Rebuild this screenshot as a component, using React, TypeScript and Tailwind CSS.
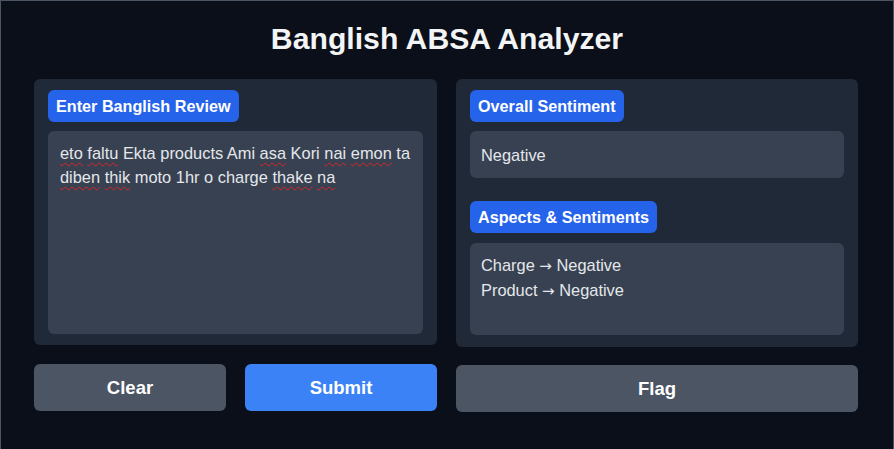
import React from "react";

const review: { w: string; bad?: boolean }[] = [
  { w: "eto", bad: true },
  { w: "faltu", bad: true },
  { w: "Ekta" },
  { w: "products" },
  { w: "Ami" },
  { w: "asa", bad: true },
  { w: "Kori" },
  { w: "nai", bad: true },
  { w: "emon", bad: true },
  { w: "ta" },
  { w: "diben", bad: true },
  { w: "thik", bad: true },
  { w: "moto" },
  { w: "1hr" },
  { w: "o" },
  { w: "charge" },
  { w: "thake", bad: true },
  { w: "na", bad: true },
];

const aspects = [
  { name: "Charge", label: "Negative" },
  { name: "Product", label: "Negative" },
];

function Label({ children }: { children: React.ReactNode }) {
  return (
    <span className="inline-block rounded-md bg-[#2563eb] px-2 py-1 text-[16.2px] font-bold leading-6 text-white">
      {children}
    </span>
  );
}

export default function App() {
  return (
    <div
      className="min-h-[449px] border border-b-0 border-[#4b5563] bg-[#0b0f19] text-[#e5e7eb]"
      style={{ fontFamily: '"Liberation Sans", Arial, sans-serif' }}
    >
      <h1 className="pt-[20px] text-center text-[30.2px] font-bold leading-9 text-[#f3f4f6]">
        Banglish ABSA Analyzer
      </h1>

      <div className="mt-[22px] flex gap-[19px] pl-[33px] pr-[35px]">
        <div className="flex w-[403px] flex-col gap-[19px]">
          <div className="rounded-md bg-[#1f2937] px-[14px] py-[11px]">
            <Label>Enter Banglish Review</Label>
            <div className="mt-[9px] h-[203px] rounded-md bg-[#374151] px-3 py-[10px] text-[16.4px] leading-6">
              {review.map((r, i) => (
                <React.Fragment key={i}>
                  <span
                    className={
                      r.bad
                        ? "underline decoration-[#dc2626] decoration-wavy decoration-1 underline-offset-[3px]"
                        : ""
                    }
                  >
                    {r.w}
                  </span>
                  {i < review.length - 1 ? " " : ""}
                </React.Fragment>
              ))}
            </div>
          </div>

          <div className="flex gap-[19px]">
            <button
              type="button"
              className="h-[47px] flex-1 rounded-md bg-[#4b5563] text-[18.5px] font-bold text-white"
            >
              Clear
            </button>
            <button
              type="button"
              className="h-[47px] flex-1 rounded-md bg-[#3b82f6] text-[18.5px] font-bold text-white"
            >
              Submit
            </button>
          </div>
        </div>

        <div className="flex w-[402px] flex-col gap-[18px]">
          <div className="rounded-md bg-[#1f2937] px-[14px] pb-[12px] pt-[11px]">
            <Label>Overall Sentiment</Label>
            <div className="mt-[9px] rounded-md bg-[#374151] px-[11px] py-[11.5px] text-[16.4px] leading-6">
              Negative
            </div>
            <div className="mt-[23px]">
              <Label>Aspects &amp; Sentiments</Label>
            </div>
            <div className="mt-[10px] h-[92px] rounded-md bg-[#374151] px-[11px] py-[10px] text-[16.4px] leading-6">
              {aspects.map((a) => (
                <div key={a.name}>
                  {a.name}{" "}
                  <span style={{ fontFamily: '"DejaVu Sans", sans-serif' }} className="text-[15px]">
                    →
                  </span>{" "}
                  {a.label}
                </div>
              ))}
            </div>
          </div>

          <button
            type="button"
            className="h-[47px] w-full rounded-md bg-[#4b5563] text-[18.5px] font-bold text-white"
          >
            Flag
          </button>
        </div>
      </div>
    </div>
  );
}
